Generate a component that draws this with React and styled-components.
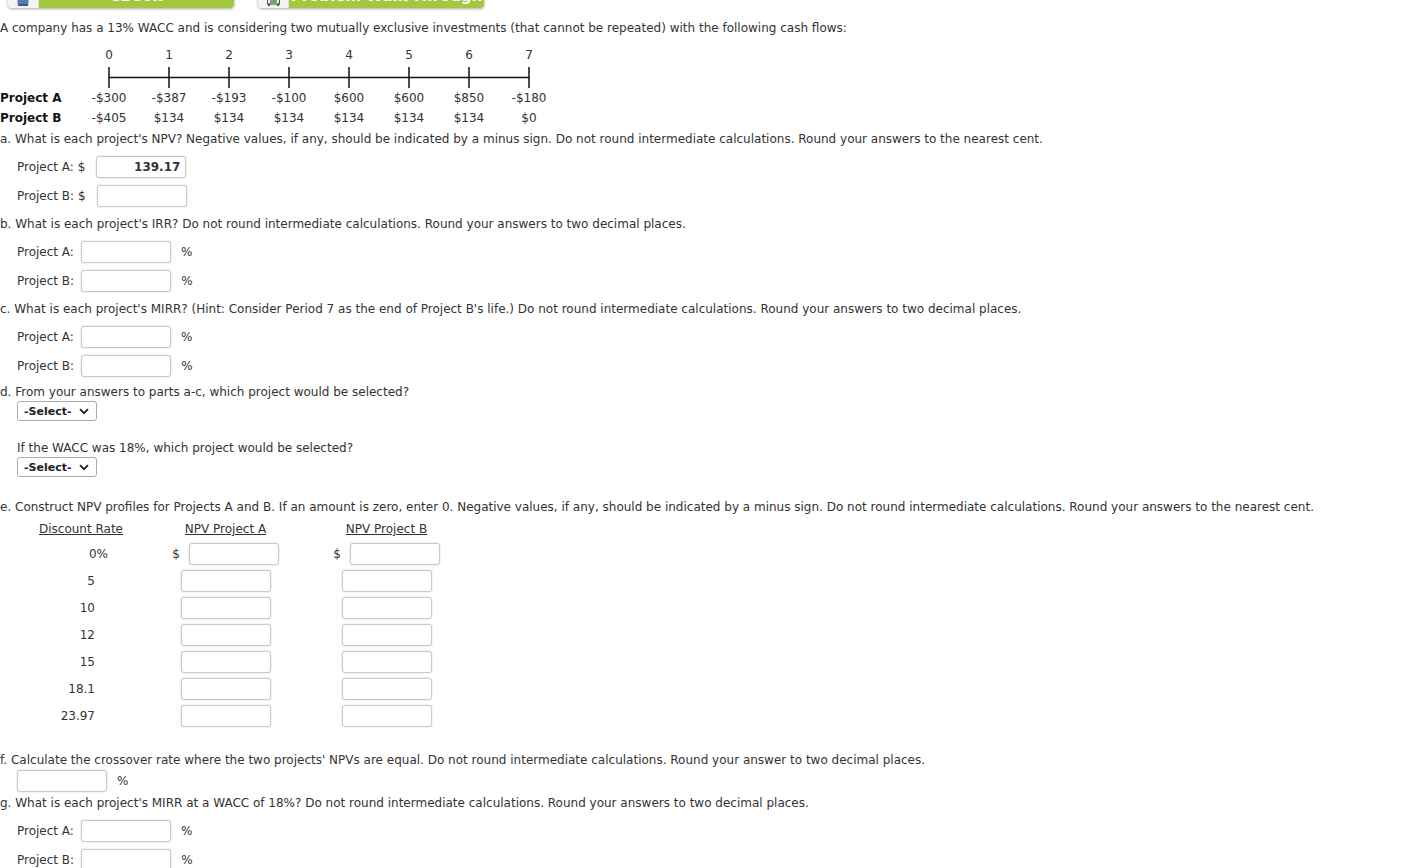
import React from "react";
import styled, { createGlobalStyle } from "styled-components";

const GlobalStyle = createGlobalStyle`
  html, body { margin: 0; padding: 0; background: #fff; }
  body {
    font-family: "DejaVu Sans", Verdana, sans-serif;
    font-size: 12px;
    color: #333;
    overflow: hidden;
  }
`;

const Page = styled.div`
  display: flex;
  flex-direction: column;
  width: 1426px;
`;

const Toolbar = styled.div`
  display: flex;
  gap: 24px;
  padding-left: 8px;
  margin-top: -16px;
`;

const ToolButton = styled.div`
  display: flex;
  width: 226px;
  height: 24px;
  border-radius: 0 0 4px 4px;
  box-shadow: 0 1px 3px rgba(0, 0, 0, 0.35);
  overflow: hidden;
`;

const IconCell = styled.div`
  width: 30px;
  background: #f4f4f4;
  border-right: 1px solid #ddd;
  display: flex;
  align-items: center;
  justify-content: center;
`;

const ButtonLabel = styled.div`
  flex: 1;
  background: #a4c740;
  color: #fff;
  font-weight: bold;
  font-size: 15px;
  display: flex;
  align-items: center;
  justify-content: center;
`;

const Intro = styled.div`
  line-height: 20px;
  margin-top: 10px;
  white-space: nowrap;
`;

const Timeline = styled.div`
  display: grid;
  grid-template-columns: 79px repeat(8, 60px);
  margin-top: 7px;
`;

const TickLabel = styled.div`
  line-height: 20px;
  text-align: center;
`;

const TimelineArt = styled.svg`
  display: block;
  grid-column: 1 / -1;
  margin-top: 2px;
`;

const RowLabel = styled.div`
  font-weight: bold;
  color: #111;
  line-height: 20px;
  white-space: nowrap;
`;

const Cell = styled.div`
  line-height: 20px;
  text-align: center;
`;

const Question = styled.div`
  line-height: 20px;
  white-space: nowrap;
  margin-top: ${(p) => p.$top || 0}px;
`;

const AnswerBlock = styled.div`
  display: flex;
  flex-direction: column;
  padding-left: 17px;
  margin-top: ${(p) => p.$top ?? 3}px;
`;

const AnswerRow = styled.div`
  display: flex;
  align-items: center;
  height: ${(p) => p.$h || 29}px;
`;

const Label = styled.span`
  white-space: nowrap;
  margin-right: ${(p) => p.$gap || 7}px;
`;

const Field = styled.div`
  box-sizing: border-box;
  width: 90px;
  height: 22px;
  border: 1px solid #c9c9c9;
  border-radius: 3px;
  box-shadow: 0 0 2px rgba(0, 0, 0, 0.18);
  background: #fff;
  font-weight: bold;
  color: #333;
  text-align: right;
  padding-right: 5px;
  line-height: 20px;
  flex: none;
`;

const Unit = styled.span`
  margin-left: ${(p) => p.$gap || 10}px;
`;

const SelectBox = styled.div`
  box-sizing: border-box;
  width: 80px;
  height: 20px;
  margin-left: 17px;
  margin-top: -1px;
  border: 1px solid #aaa;
  border-radius: 3px;
  display: flex;
  align-items: center;
  justify-content: space-between;
  padding: 0 7px 0 6px;
  font-size: 11px;
  font-weight: bold;
  color: #222;
`;

const SubQuestion = styled.div`
  line-height: 20px;
  padding-left: 17px;
  margin-top: 17px;
`;

const ProfileTable = styled.div`
  display: grid;
  grid-template-columns: 128px 161px 161px;
  grid-template-rows: 21px;
  grid-auto-rows: 27px;
  padding-left: 17px;
  margin-top: 2px;
`;

const HeaderCell = styled.div`
  text-decoration: underline;
  text-align: center;
  line-height: 20px;
  height: 20px;
`;

const RateCell = styled.div`
  box-sizing: border-box;
  width: 78px;
  text-align: right;
  display: flex;
  align-items: center;
  justify-content: flex-end;
`;

const Suffix = styled.span`
  margin-right: -13px;
`;

const FieldCell = styled.div`
  display: flex;
  align-items: center;
  justify-content: center;
  gap: 9px;
`;

const Select = () => (
  <SelectBox>
    <span>-Select-</span>
    <svg width="10" height="7" viewBox="0 0 10 7">
      <path d="M1 1.2 L5 5.2 L9 1.2" fill="none" stroke="#222" strokeWidth="1.8" />
    </svg>
  </SelectBox>
);

const flows = {
  A: ["-$300", "-$387", "-$193", "-$100", "$600", "$600", "$850", "-$180"],
  B: ["-$405", "$134", "$134", "$134", "$134", "$134", "$134", "$0"],
};

const rates = ["0", "5", "10", "12", "15", "18.1", "23.97"];

export default function App() {
  return (
    <Page>
      <GlobalStyle />
      <Toolbar>
        <ToolButton>
          <IconCell>
            <svg width="12" height="24" viewBox="0 0 12 24">
              <rect x="0.5" y="12" width="11" height="8" fill="#5a7ca8" />
              <rect x="1" y="20" width="10" height="2" fill="#3d5b85" />
            </svg>
          </IconCell>
          <ButtonLabel>eBook</ButtonLabel>
        </ToolButton>
        <ToolButton>
          <IconCell>
            <svg width="13" height="24" viewBox="0 0 13 24">
              <rect x="0.5" y="14" width="12" height="6" fill="none" stroke="#3b5f3b" strokeWidth="1.2" />
              <rect x="3" y="16" width="7" height="3" fill="#7ea06d" />
              <rect x="1" y="20" width="2" height="2" fill="#3b5f3b" />
              <rect x="10" y="20" width="2" height="2" fill="#3b5f3b" />
            </svg>
          </IconCell>
          <ButtonLabel>Problem Walk-Through</ButtonLabel>
        </ToolButton>
      </Toolbar>

      <Intro>
        A company has a 13% WACC and is considering two mutually exclusive investments (that cannot be repeated) with the following cash flows:
      </Intro>

      <Timeline>
        <div />
        {[0, 1, 2, 3, 4, 5, 6, 7].map((n) => (
          <TickLabel key={n}>{n}</TickLabel>
        ))}
        <TimelineArt width="540" height="21" viewBox="0 0 540 21">
          <line x1="109" y1="10.5" x2="529" y2="10.5" stroke="#111" strokeWidth="1.5" />
          {[0, 1, 2, 3, 4, 5, 6, 7].map((n) => (
            <line key={n} x1={109 + n * 60} y1="0" x2={109 + n * 60} y2="21" stroke="#111" strokeWidth="1.5" />
          ))}
        </TimelineArt>
        <RowLabel>Project A</RowLabel>
        {flows.A.map((v, i) => (
          <Cell key={i}>{v}</Cell>
        ))}
        <RowLabel>Project B</RowLabel>
        {flows.B.map((v, i) => (
          <Cell key={i}>{v}</Cell>
        ))}
      </Timeline>

      <Question $top={1}>
        a. What is each project's NPV? Negative values, if any, should be indicated by a minus sign. Do not round intermediate calculations. Round your answers to the nearest cent.
      </Question>
      <AnswerBlock>
        <AnswerRow>
          <Label $gap={11}>Project A: $</Label>
          <Field>139.17</Field>
        </AnswerRow>
        <AnswerRow>
          <Label $gap={11}>Project B: $</Label>
          <Field />
        </AnswerRow>
      </AnswerBlock>

      <Question $top={4}>
        b. What is each project's IRR? Do not round intermediate calculations. Round your answers to two decimal places.
      </Question>
      <AnswerBlock>
        <AnswerRow>
          <Label>Project A:</Label>
          <Field />
          <Unit>%</Unit>
        </AnswerRow>
        <AnswerRow>
          <Label>Project B:</Label>
          <Field />
          <Unit>%</Unit>
        </AnswerRow>
      </AnswerBlock>

      <Question $top={4}>
        c. What is each project's MIRR? (Hint: Consider Period 7 as the end of Project B's life.) Do not round intermediate calculations. Round your answers to two decimal places.
      </Question>
      <AnswerBlock>
        <AnswerRow>
          <Label>Project A:</Label>
          <Field />
          <Unit>%</Unit>
        </AnswerRow>
        <AnswerRow>
          <Label>Project B:</Label>
          <Field />
          <Unit>%</Unit>
        </AnswerRow>
      </AnswerBlock>

      <Question $top={2}>
        d. From your answers to parts a-c, which project would be selected?
      </Question>
      <Select />
      <SubQuestion>If the WACC was 18%, which project would be selected?</SubQuestion>
      <Select />

      <Question $top={20}>
        e. Construct NPV profiles for Projects A and B. If an amount is zero, enter 0. Negative values, if any, should be indicated by a minus sign. Do not round intermediate calculations. Round your answers to the nearest cent.
      </Question>
      <ProfileTable>
        <HeaderCell>Discount Rate</HeaderCell>
        <HeaderCell>NPV Project A</HeaderCell>
        <HeaderCell>NPV Project B</HeaderCell>
        {rates.map((r, i) => (
          <React.Fragment key={r}>
            <RateCell>
              {r}
              {i === 0 && <Suffix>%</Suffix>}
            </RateCell>
            <FieldCell>
              {i === 0 && <span>$</span>}
              <Field />
            </FieldCell>
            <FieldCell>
              {i === 0 && <span>$</span>}
              <Field />
            </FieldCell>
          </React.Fragment>
        ))}
      </ProfileTable>

      <Question $top={21}>
        f. Calculate the crossover rate where the two projects' NPVs are equal. Do not round intermediate calculations. Round your answer to two decimal places.
      </Question>
      <AnswerBlock $top={-1}>
        <AnswerRow $h={23}>
          <Field />
          <Unit $gap={10}>%</Unit>
        </AnswerRow>
      </AnswerBlock>

      <Question $top={1}>
        g. What is each project's MIRR at a WACC of 18%? Do not round intermediate calculations. Round your answers to two decimal places.
      </Question>
      <AnswerBlock>
        <AnswerRow>
          <Label>Project A:</Label>
          <Field />
          <Unit>%</Unit>
        </AnswerRow>
        <AnswerRow>
          <Label>Project B:</Label>
          <Field />
          <Unit>%</Unit>
        </AnswerRow>
      </AnswerBlock>
    </Page>
  );
}
